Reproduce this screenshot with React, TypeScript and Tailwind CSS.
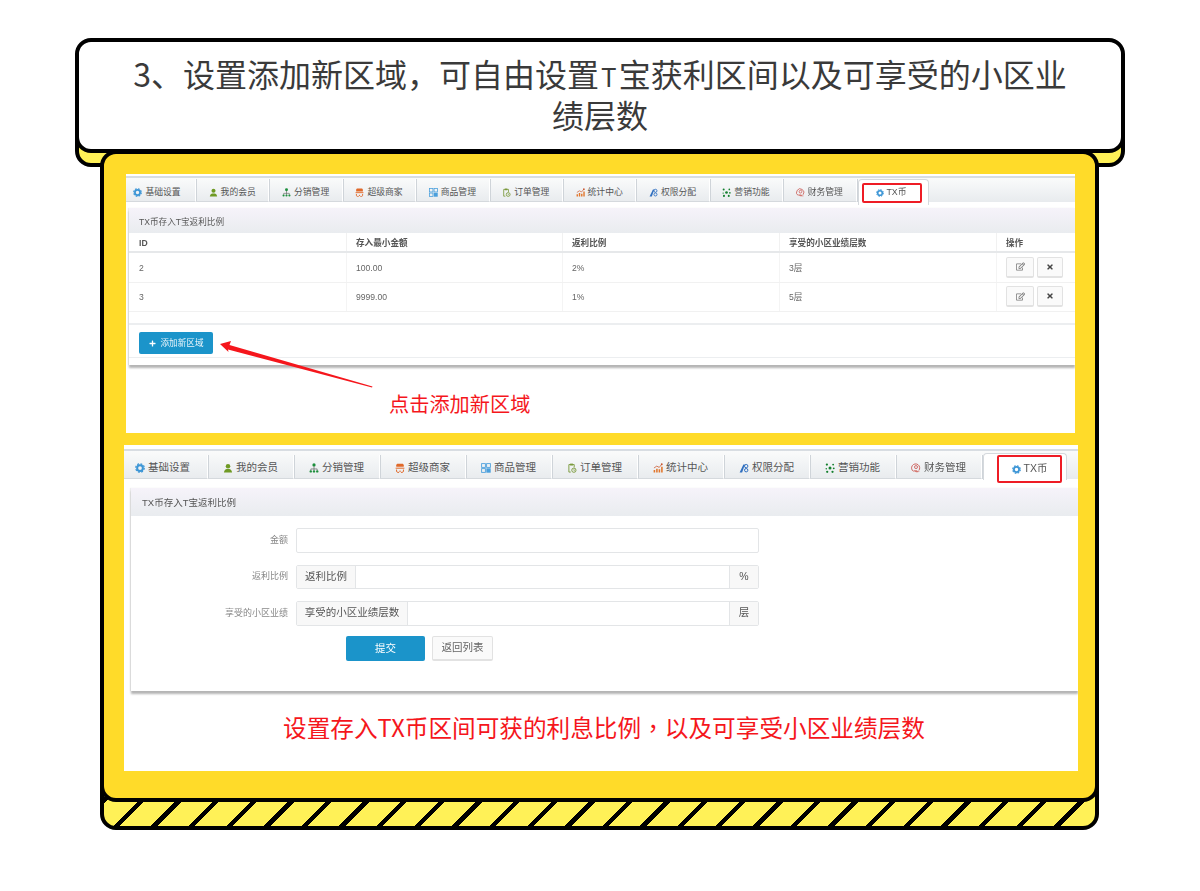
import { FaPlus, FaRegEdit, FaTimes } from "react-icons/fa";

const GearIcon = ({ className }: { className: string }) => (
  <svg viewBox="0 0 16 16" className={className}>
    <circle cx="8" cy="8" r="4.6" fill="none" stroke="#3d96d6" strokeWidth="3.2" />
    <circle cx="8" cy="8" r="6.8" fill="none" stroke="#3d96d6" strokeWidth="2" strokeDasharray="3 2.34" />
  </svg>
);
const UserIcon = ({ className }: { className: string }) => (
  <svg viewBox="0 0 16 16" className={className}>
    <circle cx="8" cy="5" r="3.6" fill="#6f9a24" />
    <path d="M1.5 15c.3-3.6 2.6-5 4.5-5.4h4c1.9.4 4.2 1.800 4.500 5.400z" fill="#6f9a24" />
  </svg>
);
const TreeIcon = ({ className }: { className: string }) => (
  <svg viewBox="0 0 16 16" className={className}>
    <circle cx="8" cy="3" r="2.600" fill="#1c8f3c" />
    <path d="M8 5v4M3 12V9.500h10V12M8 9v3" fill="none" stroke="#555" strokeWidth="1" />
    <circle cx="2.800" cy="13.400" r="1.900" fill="#1c8f3c" />
    <circle cx="8" cy="13.400" r="1.900" fill="#1c8f3c" />
    <circle cx="13.200" cy="13.400" r="1.900" fill="#1c8f3c" />
  </svg>
);
const StoreIcon = ({ className }: { className: string }) => (
  <svg viewBox="0 0 16 16" className={className}>
    <path d="M2 6V3.500C2 2 3 1 4.500 1h7C13 1 14 2 14 3.500V6z" fill="#e0692a" />
    <path d="M1 7.500h14v1.600H1z" fill="#e0692a" />
    <path d="M2.500 10.500v2.500c0 1 .8 2 2 2h2M9.500 15h2c1.200 0 2-1 2-2v-2.500" fill="none" stroke="#e0692a" strokeWidth="1.600" />
    <circle cx="8" cy="13" r="1.200" fill="#e0692a" />
  </svg>
);
const GridIcon = ({ className }: { className: string }) => (
  <svg viewBox="0 0 16 16" className={className}>
    <rect x="1" y="1" width="6" height="6" fill="none" stroke="#4a9fdc" strokeWidth="1.400" />
    <rect x="9" y="1" width="6" height="6" fill="none" stroke="#4a9fdc" strokeWidth="1.400" />
    <rect x="1" y="9" width="6" height="6" fill="none" stroke="#4a9fdc" strokeWidth="1.400" />
    <rect x="8.500" y="8.500" width="7" height="7" fill="#4a9fdc" />
  </svg>
);
const ClipIcon = ({ className }: { className: string }) => (
  <svg viewBox="0 0 16 16" className={className}>
    <path d="M3 2.500h8.500V7M6 14.500H3v-12" fill="none" stroke="#7b9a3c" strokeWidth="1.500" />
    <rect x="5" y="1" width="4.500" height="3" fill="#7b9a3c" />
    <circle cx="11" cy="11.500" r="3.400" fill="none" stroke="#7b9a3c" strokeWidth="1.500" />
    <path d="M11 9.800v2h1.600" fill="none" stroke="#7b9a3c" strokeWidth="1" />
  </svg>
);
const ChartIcon = ({ className }: { className: string }) => (
  <svg viewBox="0 0 16 16" className={className}>
    <path d="M1 11h2.500v4H1zM5 9h2.500v6H5zM9 10h2.500v5H9zM13 6h2.500v9H13z" fill="#e2762c" />
    <path d="M1.500 8 6 5l4 2 4-5" fill="none" stroke="#c9532a" strokeWidth="1.200" />
    <circle cx="14" cy="2" r="1.500" fill="#c9532a" />
  </svg>
);
const KeyIcon = ({ className }: { className: string }) => (
  <svg viewBox="0 0 16 16" className={className}>
    <path d="M1 15 7 2.500h2.500L5 15z" fill="#2f6fc0" />
    <circle cx="11.500" cy="5" r="2.700" fill="none" stroke="#2f6fc0" strokeWidth="1.600" />
    <circle cx="11.500" cy="11.500" r="2.700" fill="none" stroke="#2f6fc0" strokeWidth="1.600" />
  </svg>
);
const DotsIcon = ({ className }: { className: string }) => (
  <svg viewBox="0 0 16 16" className={className} fill="#14802e">
    <circle cx="3" cy="2.500" r="1.800" />
    <circle cx="13" cy="2.500" r="1.500" />
    <circle cx="8" cy="8" r="2.400" />
    <circle cx="2" cy="9" r="1.200" />
    <circle cx="14" cy="8.500" r="1.500" />
    <circle cx="3.500" cy="14" r="1.800" />
    <circle cx="12" cy="14" r="1.800" />
  </svg>
);
const FinanceIcon = ({ className }: { className: string }) => (
  <svg viewBox="0 0 16 16" className={className}>
    <path d="M4 13.500A6.500 6.500 0 1 1 12.500 12" fill="none" stroke="#c9544f" strokeWidth="1.400" />
    <circle cx="8" cy="6.500" r="2.400" fill="none" stroke="#c9544f" strokeWidth="1.300" />
    <path d="M3.500 11.500c2.500 3.500 7 4 11 2.500-2.500-.5-4-1-5.500-2.500" fill="#d4766f" />
  </svg>
);

const tabs = [
  { name: "基础设置", Icon: GearIcon },
  { name: "我的会员", Icon: UserIcon },
  { name: "分销管理", Icon: TreeIcon },
  { name: "超级商家", Icon: StoreIcon },
  { name: "商品管理", Icon: GridIcon },
  { name: "订单管理", Icon: ClipIcon },
  { name: "统计中心", Icon: ChartIcon },
  { name: "权限分配", Icon: KeyIcon },
  { name: "营销功能", Icon: DotsIcon },
  { name: "财务管理", Icon: FinanceIcon },
];

function TabStrip({ large }: { large?: boolean }) {
  const icon = large ? "w-[10px] h-[10px] shrink-0" : "w-[9px] h-[9px] shrink-0";
  return (
    <div
      className={
        large
          ? "flex h-[30px] pt-[4px] border-t-2 border-[#d8dde2] bg-gradient-to-b from-[#fafbfb] to-[#e8ebee]"
          : "flex h-[26px] pt-[1px] border-t-2 border-[#d8dde2] bg-gradient-to-b from-[#fafbfb] to-[#e8ebee]"
      }
    >
      {tabs.map((t, i) => (
        <div
          key={t.name}
          className={
            (large
              ? "w-[86px] pt-[2px] text-[10.5px] gap-[3px] "
              : "w-[73.4px] pt-[5px] text-[8.8px] gap-[3px] ") +
            (i === 0 ? (large ? "!w-[84px] pr-[6px] " : "!w-[70px] pr-[7px] ") : "") +
            "flex items-center justify-center shrink-0 border-r border-white shadow-[1px_0_0_#cfd4d9] border-b border-b-[#d5d9dd] text-[#555]"
          }
        >
          <t.Icon className={icon} />
          <span>{t.name}</span>
        </div>
      ))}
      <div
        className={
          large
            ? "w-[84px] h-[27px] -mt-[2px] ml-[1px] pl-[13px] pr-[4px] pt-[1px] bg-white border border-b-0 border-[#d5d9dd] rounded-t-sm shrink-0"
            : "w-[71px] h-[26px] ml-[1px] pl-[3px] pr-[6px] pt-[3px] bg-white border border-b-0 border-[#d5d9dd] rounded-t-sm shrink-0"
        }
      >
        <div
          className={
            large
              ? "h-[28px] flex items-center justify-center gap-[3px] border-2 border-[#ee1c25] rounded-[2px] text-[10.5px] text-[#555]"
              : "h-[20px] flex items-center justify-center gap-[2px] border-2 border-[#ee1c25] rounded-[2px] text-[8.8px] text-[#555]"
          }
        >
          <GearIcon className={large ? "w-[9px] h-[9px] shrink-0" : "w-[8px] h-[8px] shrink-0"} />
          <span>TX币</span>
        </div>
      </div>
    </div>
  );
}

const rows = [
  { id: "2", min: "100.00", rate: "2%", level: "3层" },
  { id: "3", min: "9999.00", rate: "1%", level: "5层" },
];

const cols = "grid grid-cols-[217px_216px_217px_217px_1fr]";

function RateTable() {
  return (
    <div className="text-[8.6px] text-[#666]">
      <div className={cols + " h-[20px] border-b-2 border-[#e6e8ea] font-bold text-[#555]"}>
        {["ID", "存入最小金额", "返利比例", "享受的小区业绩层数", "操作"].map((h, i) => (
          <div key={h} className={(i ? "border-l border-[#f1f1f1] pl-[9px] " : "pl-[10px] ") + "pt-[3px] flex items-center"}>
            {h}
          </div>
        ))}
      </div>
      {rows.map((r) => (
        <div key={r.id} className={cols + " h-[29.500px] border-b border-[#f1f1f1]"}>
          <div className="pl-[10px] pt-[2px] flex items-center">{r.id}</div>
          <div className="pl-[9px] pt-[2px] flex items-center border-l border-[#f4f4f4]">{r.min}</div>
          <div className="pl-[9px] pt-[2px] flex items-center border-l border-[#f4f4f4]">{r.rate}</div>
          <div className="pl-[9px] pt-[2px] flex items-center border-l border-[#f4f4f4]">{r.level}</div>
          <div className="pl-[9px] flex items-center gap-[3px] border-l border-[#f4f4f4]">
            <span className="w-[28px] h-[21px] flex items-center justify-center bg-[#fafafa] border border-[#e2e2e2] border-b-2 rounded-[2px] text-[#777]">
              <FaRegEdit className="w-[9px] h-[9px]" />
            </span>
            <span className="w-[26px] h-[21px] flex items-center justify-center bg-[#fafafa] border border-[#e2e2e2] border-b-2 rounded-[2px] text-[#444]">
              <FaTimes className="w-[8px] h-[8px]" />
            </span>
          </div>
        </div>
      ))}
    </div>
  );
}

function AddonRow({ label, addon, addonClass, suffix }: { label: string; addon?: string; addonClass?: string; suffix?: string }) {
  return (
    <div className="flex items-center h-[24.500px] mb-[12px]">
      <div className="w-[158px] pr-[1px] text-right text-[9px] text-[#888]">{label}</div>
      <div className="ml-[7px] w-[463px] h-full flex border border-[#e3e5e7] rounded-[2px] bg-white text-[10.500px] text-[#555]">
        {addon && (
          <div className={addonClass + " flex items-center justify-center bg-[#f8f8f8] border-r border-[#e3e5e7]"}>{addon}</div>
        )}
        <div className="flex-1" />
        {suffix && (
          <div className="w-[29px] flex items-center justify-center bg-[#f8f8f8] border-l border-[#e3e5e7]">{suffix}</div>
        )}
      </div>
    </div>
  );
}

export default function App() {
  return (
    <div className="relative w-[1200px] h-[891px] bg-white pt-[38px] font-['Liberation_Sans','Noto_Sans_CJK_SC',sans-serif]">
      {/* band behind the title */}
      <div className="absolute left-[75px] top-[130px] w-[1050px] h-[37px] bg-[#fff157] border-4 border-black rounded-b-[16px]" />

      <div className="relative z-20 mx-[75px] h-[115px] px-[40px] pb-[5px] flex items-center justify-center bg-white border-4 border-black rounded-[16px] text-center text-[32px] leading-[38px] text-[#3a3a3a] font-['Noto_Sans_CJK_SC',sans-serif]">
        <p className="w-[940px]">
          3、设置添加新区域，可自由设置<span className="px-[2px] text-[26px]">T</span>宝获利区间以及可享受的小区业绩层数
        </p>
      </div>

      <div className="relative ml-[100px] mr-[101px] -mt-[3px]">
        {/* striped base */}
        <div className="absolute left-0 right-0 bottom-[-28px] h-[60px] border-4 border-black rounded-b-[16px] bg-[repeating-linear-gradient(135deg,#fff157_0,#fff157_16.700px,#000_16.700px,#000_21.200px,#fff157_21.200px,#fff157_26.600px)]" />

        <div className="relative z-10 h-[652px] pt-[20px] bg-[#ffdb29] border-4 border-black rounded-[16px]">
          {/* upper screenshot */}
          <div className="relative ml-[22px] mr-[20px] h-[259px] bg-white overflow-hidden">
            <div className="pt-[2px] blur-[0.300px]">
              <TabStrip />
              <div className="mt-[6px] ml-[3px] h-[157px] bg-white shadow-[0_3px_2px_#b5b5b5,-1px_0_1px_#eee]">
                <div className="h-[25px] pl-[10px] pt-[4px] flex items-center text-[8.600px] text-[#555] bg-gradient-to-b from-[#f6f3fa] to-[#e9ecef]">
                  TX币存入T宝返利比例
                </div>
                <RateTable />
                <div className="mt-[11px] h-[35px] pt-[7px] pl-[10px] border-t-2 border-[#eceef0] border-b border-b-[#eceef0]">
                  <div className="w-[74px] h-[22px] flex items-center justify-center gap-[5px] bg-[#1b94ca] rounded-[2px] text-[8.600px] text-[#e8f4fa]">
                    <FaPlus className="w-[7px] h-[7px] text-white" />
                    <span>添加新区域</span>
                  </div>
                </div>
              </div>
            </div>
            <div className="mt-[25px] ml-[263px] text-[20.200px] leading-[28px] text-[#f5161c] font-['Noto_Sans_CJK_SC',sans-serif]">
              点击添加新区域
            </div>
            <svg viewBox="126 174 949 259" className="absolute inset-0 w-[949px] h-[259px]">
              <polygon points="220,344 231,341 229.500,345 372.500,386.500 372,387.500 228,349.500 228.500,352" fill="#f5161c" />
            </svg>
          </div>

          {/* lower screenshot */}
          <div className="ml-[20px] mr-[17px] mt-[12px] h-[326px] bg-white overflow-hidden">
            <div className="pt-[4px] blur-[0.300px]">
              <TabStrip large />
              <div className="mt-[9px] ml-[7px] h-[203px] bg-white shadow-[0_3px_2px_#b5b5b5,-1px_0_1px_#eee]">
                <div className="h-[28px] pl-[11px] pt-[2px] flex items-center text-[9.500px] text-[#555] bg-gradient-to-b from-[#f6f3fa] to-[#e9ecef]">
                  TX币存入T宝返利比例
                </div>
                <div className="pt-[12px]">
                  <AddonRow label="金额" />
                  <AddonRow label="返利比例" addon="返利比例" addonClass="w-[59px]" suffix="%" />
                  <AddonRow label="享受的小区业绩" addon="享受的小区业绩层数" addonClass="w-[111px]" suffix="层" />
                  <div className="flex gap-[7px] ml-[215px] -mt-[1.500px] text-[10.500px]">
                    <div className="w-[79px] h-[25px] flex items-center justify-center bg-[#1b94ca] rounded-[2px] text-white">提交</div>
                    <div className="w-[61px] h-[25px] flex items-center justify-center bg-[#fafafa] border border-[#e2e2e2] border-b-2 rounded-[2px] text-[#666]">返回列表</div>
                  </div>
                </div>
              </div>
            </div>
            <div className="mt-[19px] ml-[159px] text-[23.650px] leading-[34px] text-[#f5161c] font-['Noto_Sans_CJK_SC',sans-serif] whitespace-nowrap">
              设置存入TX币区间可获的利息比例<span className="font-['Noto_Sans_CJK_TC',sans-serif]">，</span>以及可享受小区业绩层数
            </div>
          </div>
        </div>
      </div>
    </div>
  );
}
